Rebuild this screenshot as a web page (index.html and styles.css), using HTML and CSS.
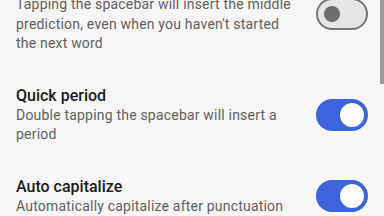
FILE: index.html
```html
<!DOCTYPE html>
<html lang="en">
<head>
    <meta charset="UTF-8">
    <meta name="viewport" content="width=device-width, initial-scale=1.0">
    <link rel="stylesheet" href="styles.css">
    <title>Keyboard settings</title>
</head>
<body>

    <div class="settings">
        <div class="item">
            <div class="text">
                <div class="title">Middle prediction</div>
                <div class="summary">Tapping the spacebar will insert the middle prediction, even when you haven't started the next word</div>
            </div>
            <div class="switch"><span class="knob"></span></div>
        </div>
        <div class="item">
            <div class="text">
                <div class="title">Quick period</div>
                <div class="summary">Double tapping the spacebar will insert a period</div>
            </div>
            <div class="switch on"><span class="knob"></span></div>
        </div>
        <div class="item">
            <div class="text">
                <div class="title">Auto capitalize</div>
                <div class="summary">Automatically capitalize after punctuation</div>
            </div>
            <div class="switch on"><span class="knob"></span></div>
        </div>
    </div>
    <div class="scrollbar"></div>

</body>
</html>
```

FILE: styles.css
```css
body {
    margin: 0;
    height: 216px;
    overflow: hidden;
    background-color: #f7f7f7;
    font-family: Roboto, "Noto Sans", sans-serif;
}

.settings {
    margin-top: -41px;
}

.item {
    display: flex;
    align-items: center;
    gap: 24px;
    padding: 16px 16px;
}

.text {
    flex: 1;
}

.title {
    font-size: 16px;
    font-weight: 500;
    line-height: 20px;
    color: #1b1b1b;
}

.summary {
    font-size: 14px;
    line-height: 19.5px;
    color: #606060;
    letter-spacing: 0.2px;
}

.switch {
    flex: none;
    box-sizing: content-box;
    width: 36px;
    height: 28px;
    padding: 0 6px;
    border: 2px solid #757575;
    border-radius: 16px;
    background-color: #e6e6e6;
    display: flex;
    align-items: center;
}

.knob {
    width: 16px;
    height: 16px;
    border-radius: 50%;
    background-color: #6e6e6e;
}

.switch.on {
    width: 48px;
    padding: 0;
    background-color: #3d63dd;
    border-color: #3d63dd;
    justify-content: flex-end;
}

.switch.on .knob {
    width: 24px;
    height: 24px;
    margin-right: 2px;
    background-color: #fff;
}

.scrollbar {
    position: absolute;
    top: 0;
    right: 0;
    width: 4px;
    height: 84px;
    background-color: #9a9a9a;
}
```
